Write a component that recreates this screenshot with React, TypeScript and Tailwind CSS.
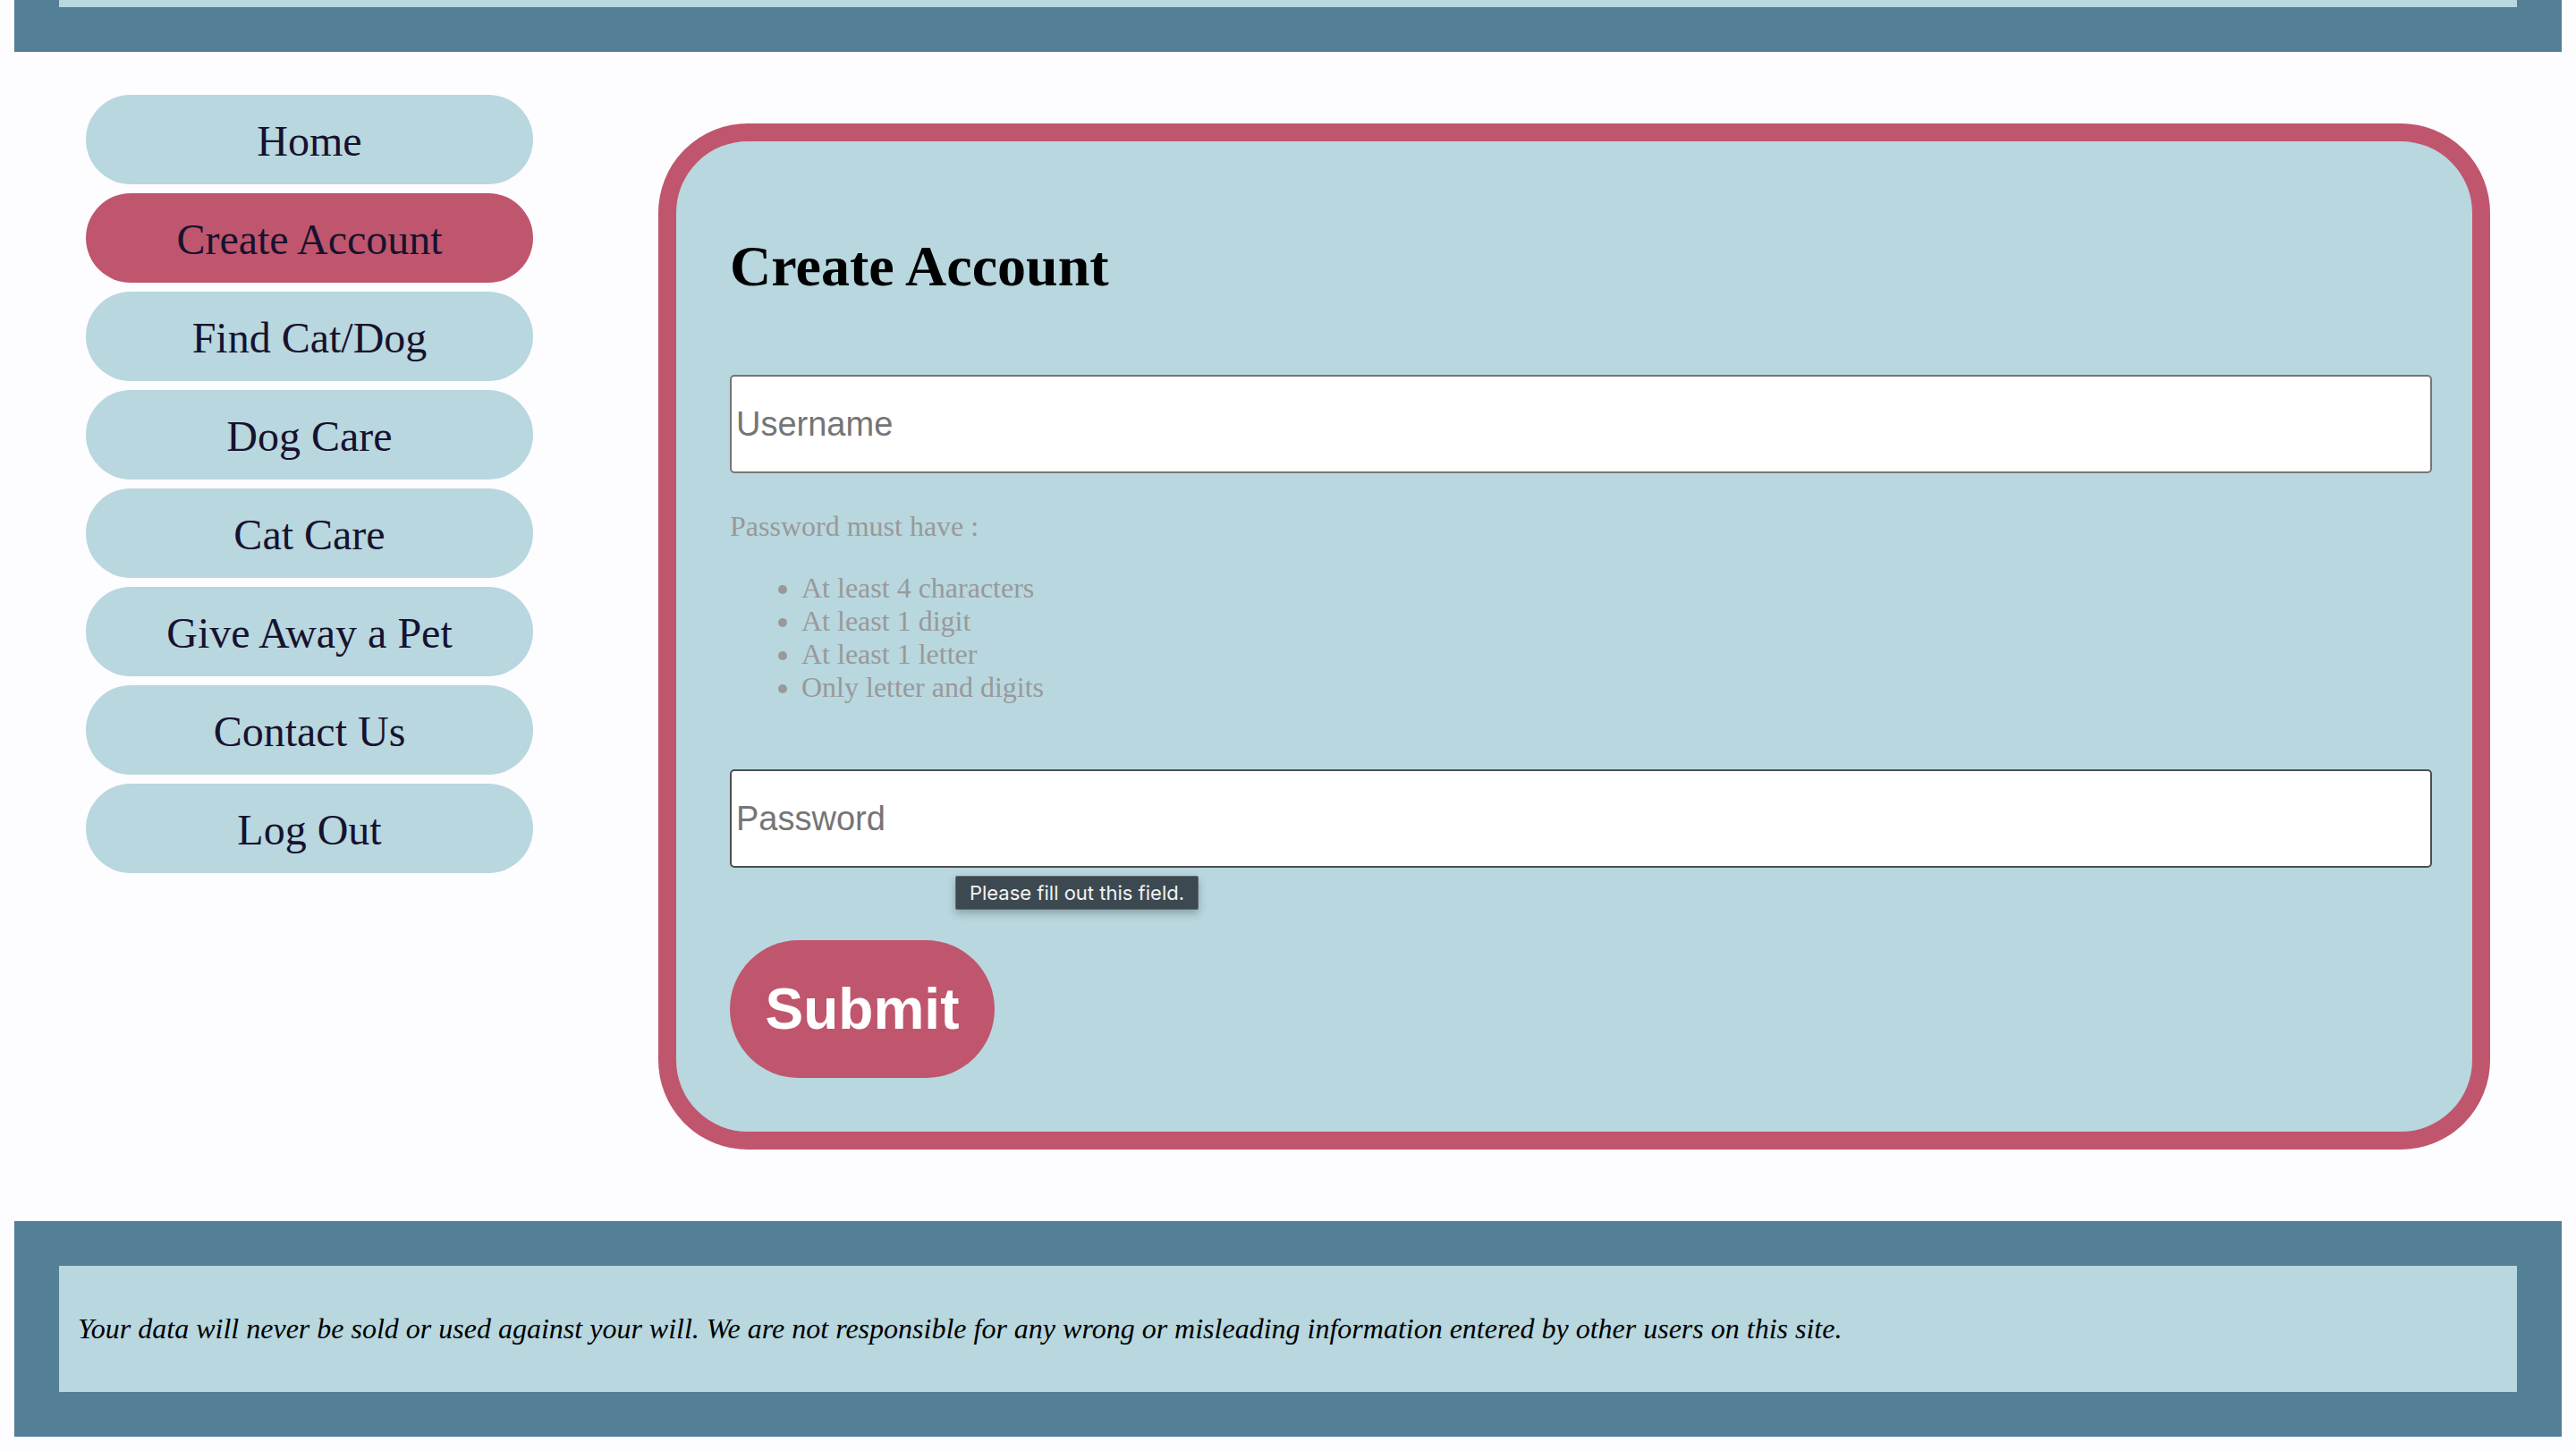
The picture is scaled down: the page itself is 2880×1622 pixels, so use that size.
const links = [
  "Home",
  "Create Account",
  "Find Cat/Dog",
  "Dog Care",
  "Cat Care",
  "Give Away a Pet",
  "Contact Us",
  "Log Out",
]

const rules = [
  "At least 4 characters",
  "At least 1 digit",
  "At least 1 letter",
  "Only letter and digits",
]

const App = () => (
  <div className="min-h-screen bg-[#fdfcff] px-4 pb-4 font-['Liberation_Serif',serif] text-black">
    {/* header, scrolled so only its bottom edge shows */}
    <div className="bg-[#537f97] px-[50px] pb-[50px]">
      <div className="h-[8px] bg-[#b8d7df]"></div>
    </div>

    <div className="flex items-start pt-[48px] pb-[80px]">
      <nav className="ml-[80px] w-[500px] flex flex-col gap-[10px]">
        {links.map((link) => (
          <a
            key={link}
            href="#"
            className={`h-[100px] pt-[3px] rounded-full flex items-center justify-center text-[48px] leading-none text-[#17122f] ${
              link === "Create Account" ? "bg-[#c0566d]" : "bg-[#b8d7df]"
            }`}
          >
            {link}
          </a>
        ))}
      </nav>

      <div className="ml-[140px] mt-[32px] w-[2048px] rounded-[100px] border-[20px] border-[#c0566d] bg-[#b8d7df] p-[60px]">
        <h1 className="mt-[44px] text-[64px] leading-[71px] font-bold">Create Account</h1>

        <input
          type="text"
          placeholder="Username"
          className="mt-[86px] block w-[1903px] h-[110px] rounded-[5px] border-2 border-[#767676] bg-white px-[5px] font-['Liberation_Sans',Arial,sans-serif] text-[38px] placeholder:text-[#757575] outline-none"
        />

        <p className="mt-[41px] text-[32px] leading-[37px] text-[#999999]">Password must have :</p>
        <ul className="mt-[32px] list-disc pl-[80px] text-[32px] leading-[37px] text-[#999999]">
          {rules.map((rule) => (
            <li key={rule}>{rule}</li>
          ))}
        </ul>

        <div className="relative mt-[73px]">
          <input
            type="password"
            placeholder="Password"
            className="block w-[1903px] h-[110px] rounded-[5px] border-2 border-[#4e4e4e] bg-white px-[5px] font-['Liberation_Sans',Arial,sans-serif] text-[38px] placeholder:text-[#757575] outline-none"
          />
          <div className="absolute left-[252px] top-[119px] h-[38px] w-[272px] flex items-center justify-center rounded-[2px] border border-[#5d6a72] bg-[#3c4951] font-['Inter',sans-serif] text-[22px] text-[#f2f2f2] shadow-[0_4px_10px_rgba(0,0,0,0.25)]">
            Please fill out this field.
          </div>
        </div>

        <button className="mt-[81px] w-[296px] h-[154px] rounded-full bg-[#c0566d] font-['Liberation_Sans',Arial,sans-serif] text-[64px] font-bold text-white">
          Submit
        </button>
      </div>
    </div>

    <footer className="bg-[#537f97] p-[50px]">
      <div className="bg-[#b8d7df] px-[21px] py-[52px]">
        <p className="text-[32px] leading-[37px] italic whitespace-nowrap">
          Your data will never be sold or used against your will. We are not responsible for any wrong or misleading information entered by other users on this site.
        </p>
      </div>
    </footer>
  </div>
)

export default App
